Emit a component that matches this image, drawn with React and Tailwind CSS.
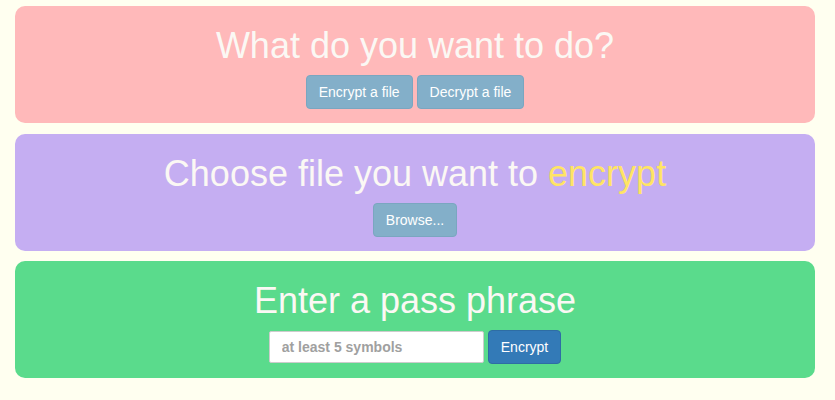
export default function App() {
  const font = { fontFamily: '"Liberation Sans", Arial, Helvetica, sans-serif' };
  const softBtn =
    "h-[34px] rounded-[4px] border border-[#7aa6c0] bg-[#83afc9] px-3 text-[14px] leading-5 text-white";
  const panel = "flex h-[117px] flex-col items-center rounded-[10px] pt-5";

  return (
    <div className="min-h-[400px] bg-[#fffff0] pl-[15px] pt-[6px]" style={font}>
      <div className="flex w-[800px] flex-col gap-[10.5px]">
        <section className={`${panel} bg-[#ffb9ba]`}>
          <h1 className="mb-[9px] text-[36px] leading-[40px] text-[#fbf8f4]">What do you want to do?</h1>
          <div className="flex gap-1">
            <button className={softBtn}>Encrypt a file</button>
            <button className={softBtn}>Decrypt a file</button>
          </div>
        </section>

        <section className={`${panel} bg-[#c5aef2]`}>
          <h1 className="mb-[9px] text-[36px] leading-[40px] text-[#fbf8f4]">
            Choose file you want to <span className="text-[#ffe465]">encrypt</span>
          </h1>
          <button className={softBtn}>Browse...</button>
        </section>

        <section className={`${panel} bg-[#5adb8c]`}>
          <h1 className="mb-[9px] text-[36px] leading-[40px] text-[#fbf8f4]">Enter a pass phrase</h1>
          <div className="flex items-center gap-1">
            <input
              type="password"
              placeholder="at least 5 symbols"
              className="h-[32px] w-[215px] rounded-[2px] border border-[#cccccc] bg-white px-3 text-[14px] font-bold placeholder:text-[#a0a0a0] outline-none"
              style={font}
            />
            <button className="h-[34px] rounded-[4px] border border-[#2e6da4] bg-[#337ab7] px-3 text-[14px] leading-5 text-white">
              Encrypt
            </button>
          </div>
        </section>
      </div>
    </div>
  );
}
